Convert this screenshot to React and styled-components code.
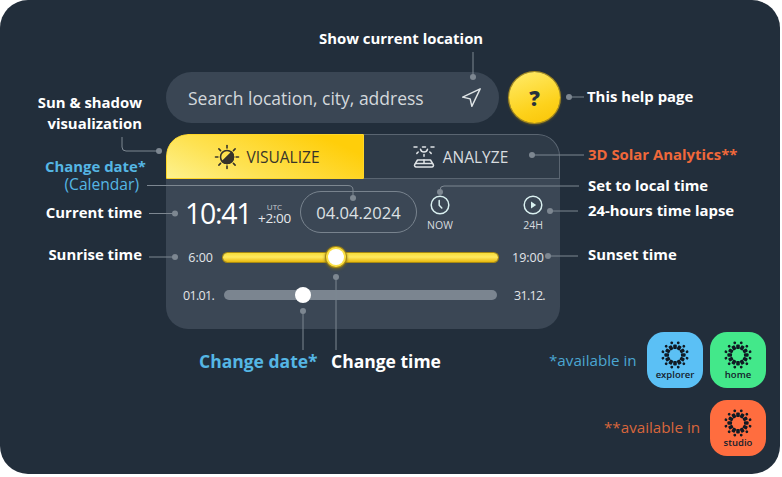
import React from "react";
import styled, { createGlobalStyle } from "styled-components";

const GlobalStyle = createGlobalStyle`
  html, body {
    margin: 0;
    padding: 0;
    background: #fff;
    font-family: "Open Sans", "Liberation Sans", sans-serif;
  }
`;

const Frame = styled.div`
  position: relative;
  box-sizing: border-box;
  width: 780px;
  height: 474px;
  padding: 72px 0 0 166px;
  background: #222e3b;
  border-radius: 28px;
  overflow: hidden;
`;

const Widget = styled.div`
  display: flex;
  flex-direction: column;
  gap: 11px;
  width: 394px;
`;

const SearchRow = styled.div`
  display: flex;
  gap: 10px;
`;

const SearchBar = styled.div`
  flex: 1;
  height: 51px;
  box-sizing: border-box;
  padding: 0 18px 0 22px;
  display: flex;
  align-items: center;
  justify-content: space-between;
  background: #3a4654;
  border-radius: 26px;
  color: #d3d8dc;
  font-size: 17.5px;
`;

const HelpButton = styled.div`
  width: 51px;
  height: 51px;
  display: flex;
  align-items: center;
  justify-content: center;
  border-radius: 50%;
  background: linear-gradient(160deg, #ffe85f 10%, #fdd21c 65%, #f9c406 100%);
  box-shadow: 0 0 0 1px #a98c1e, 0 1px 3px #8c7518;
  color: #28313c;
  font-size: 21px;
  font-weight: 800;
`;

const Panel = styled.div`
  height: 195px;
  background: #3b4755;
  border-radius: 22px;
  overflow: hidden;
  display: flex;
  flex-direction: column;
`;

const Tabs = styled.div`
  display: flex;
  height: 45px;
  flex: none;
`;

const Tab = styled.div`
  display: flex;
  align-items: center;
  justify-content: center;
  box-sizing: border-box;
  font-size: 15.5px;
  ${(p) =>
    p.$active
      ? `
    width: 198px;
    gap: 6px;
    padding-left: 4px;
    color: #37342a;
    background: linear-gradient(25deg, #fdf28f 0%, #fee252 35%, #ffce0a 85%);
    border: 1px solid #ffd728;
    border-radius: 22px 0 0 0;
  `
      : `
    flex: 1;
    gap: 8px;
    padding-right: 2px;
    color: #d8dcdf;
    background: #2f3b48;
    border: 1px solid #5a6571;
    border-left: 0;
    border-radius: 0 22px 0 0;
  `}
`;

const TimeRow = styled.div`
  display: flex;
  align-items: center;
  height: 66px;
  flex: none;
  padding-left: 19px;
`;

const Clock = styled.div`
  flex: none;
  width: 66px;
  color: #fff;
  font-size: 28.5px;
  font-weight: 500;
  letter-spacing: -1.3px;
  line-height: 1;
  margin-top: 2px;
`;

const Zone = styled.div`
  flex: none;
  width: 37px;
  margin: 2px 7px 0 5px;
  display: flex;
  flex-direction: column;
  align-items: center;
  gap: 1px;
  color: #e7eaec;
  font-size: 13.5px;
  letter-spacing: -0.3px;
  line-height: 12px;
  span {
    font-size: 8px;
    line-height: 9px;
    letter-spacing: 0;
    color: #c9ced3;
  }
`;

const DatePill = styled.div`
  width: 117px;
  height: 42px;
  box-sizing: border-box;
  display: flex;
  align-items: center;
  justify-content: center;
  border: 1px solid #78838e;
  border-radius: 21px;
  color: #dde1e4;
  font-size: 16.6px;
`;

const Action = styled.div`
  position: absolute;
  top: 195px;
  left: ${(p) => p.$x}px;
  width: 40px;
  display: flex;
  flex-direction: column;
  align-items: center;
  gap: 4px;
  color: #d7dbdf;
  font-size: 10.5px;
  line-height: 12px;
`;

const SliderRow = styled.div`
  display: flex;
  align-items: center;
  height: ${(p) => p.$height}px;
  flex: none;
  color: #e2e5e8;
  font-size: 12.5px;
  letter-spacing: ${(p) => p.$spacing}px;
`;

const RangeLabel = styled.div`
  width: ${(p) => p.$width}px;
  flex: none;
  text-align: right;
`;

const Track = styled.div`
  position: relative;
  flex: none;
  width: ${(p) => p.$width}px;
  height: ${(p) => (p.$yellow ? 9 : 10)}px;
  margin: 0 ${(p) => p.$after}px 0 ${(p) => p.$before}px;
  border-radius: 5px;
  background: ${(p) =>
    p.$yellow
      ? "linear-gradient(180deg, #f6dc38 0%, #ffe95f 45%, #e8b90c 100%)"
      : "#7b8590"};
  box-shadow: ${(p) => (p.$yellow ? "0 0 0 1px #a88a12" : "none")};
`;

const Thumb = styled.div`
  position: absolute;
  top: 50%;
  left: ${(p) => p.$left}px;
  width: ${(p) => p.$size}px;
  height: ${(p) => p.$size}px;
  transform: translate(-50%, -50%);
  border-radius: 50%;
  background: #fff;
  box-shadow: ${(p) => (p.$yellow ? "0 0 0 2px #fbe045, 0 0 0 3px #a88a12, 0 1px 3px 3px #7d6d1c" : "none")};
`;

const Leaders = styled.svg`
  position: absolute;
  inset: 0;
  pointer-events: none;
`;

const Note = styled.div`
  position: absolute;
  top: ${(p) => p.$y}px;
  ${(p) => (p.$right !== undefined ? `right: ${780 - p.$right}px; text-align: right;` : `left: ${p.$x}px;`)}
  transform: translateY(calc(-50% - 1px));
  white-space: nowrap;
  color: ${(p) => p.$color || "#fff"};
  font-size: ${(p) => p.$size || 14.9}px;
  font-weight: ${(p) => p.$weight || 700};
  line-height: 21px;
`;

const AppTile = styled.div`
  position: absolute;
  left: ${(p) => p.$x}px;
  top: ${(p) => p.$y}px;
  width: 56px;
  height: 56px;
  display: flex;
  flex-direction: column;
  align-items: center;
  padding-top: 9px;
  box-sizing: border-box;
  background: ${(p) => p.$bg};
  border-radius: 17px;
  color: #14202c;
  font-size: 9.5px;
  font-weight: 600;
  line-height: 12px;
`;

function SunLogo() {
  const spokes = Array.from({ length: 12 }, (_, i) => i * 30);
  return (
    <svg width="28" height="28" viewBox="0 0 28 28" fill="#101a24">
      {spokes.map((a) => (
        <g key={a} transform={`rotate(${a} 14 14)`}>
          <rect x="12.2" y="3.4" width="3.6" height="4.6" rx="1" />
          <circle cx="14" cy="1.5" r="1.4" transform="rotate(15 14 14)" />
        </g>
      ))}
    </svg>
  );
}

function HalfSun() {
  const rays = [0, 45, 90, 135, 180, 225, 270, 315];
  return (
    <svg width="26" height="26" viewBox="0 0 26 26" fill="none" stroke="#37342a" strokeWidth="1.6" strokeLinecap="round">
      <circle cx="13" cy="13" r="6.5" />
      <path d="M8.4 17.6a6.5 6.5 0 0 0 9.2 -9.2z" fill="#37342a" />
      {rays.map((a) => (
        <path key={a} d="M13 1.5v2.4" transform={`rotate(${a} 13 13)`} />
      ))}
    </svg>
  );
}

function PanelSun() {
  return (
    <svg width="22" height="22" viewBox="0 0 22 22" fill="none" stroke="#dfe3e6" strokeWidth="1.5" strokeLinecap="round" strokeLinejoin="round">
      <path d="M7.5 3.2a3.6 3.6 0 0 0 7 0" />
      <path d="M1 1h3M18 1h3M9.5 1h3M11 8.4v1.8M5.2 6l-1.4 1.4M16.8 6l1.4 1.4" />
      <path d="M4.5 14h13l2.8 4.6a1.6 1.6 0 0 1 -1.4 2.4H3.1a1.6 1.6 0 0 1 -1.4 -2.4z" />
      <path d="M2.5 17.5h17M11 14v3.5" />
    </svg>
  );
}

function NowIcon() {
  return (
    <svg width="20" height="20" viewBox="0 0 20 20" fill="none" stroke="#d9f0f0" strokeWidth="1.5" strokeLinecap="round" strokeLinejoin="round">
      <circle cx="10" cy="10" r="8.8" />
      <path d="M9.2 5.6v4.6l2.6 2.8" />
    </svg>
  );
}

function PlayIcon() {
  return (
    <svg width="20" height="20" viewBox="0 0 20 20" fill="none" stroke="#d9f0f0" strokeWidth="1.5">
      <circle cx="10" cy="10" r="8.8" />
      <path d="M8 6.6l5.2 3.4L8 13.4z" fill="#d9f0f0" stroke="none" />
    </svg>
  );
}

const lines = [
  "M473 52V77",
  "M569 97H584",
  "M532 155H584",
  "M440 192V190Q440 186 444 186H579",
  "M550 211H578",
  "M122 137V147Q122 151 126 151H159",
  "M147 185.5H348Q353 185.5 353 190V198",
  "M149 213.5H175",
  "M149 257H175",
  "M548 256H578",
  "M336 277V350",
  "M303 311V350",
];

const dots = [
  [473, 77], [569, 97], [532, 155], [440, 192], [550, 211], [159, 151],
  [353, 198], [175, 213.5], [175, 257], [548, 256], [336, 277], [303, 311],
];

export default function App() {
  return (
    <Frame>
      <GlobalStyle />
      <Widget>
        <SearchRow>
          <SearchBar>
            Search location, city, address
            <svg width="20" height="20" viewBox="0 0 24 24" fill="none" stroke="#dfe4e6" strokeWidth="1.7" strokeLinejoin="round">
              <polygon points="2,11 23,1 13,22 11,13" />
            </svg>
          </SearchBar>
          <HelpButton>?</HelpButton>
        </SearchRow>
        <Panel>
          <Tabs>
            <Tab $active>
              <HalfSun />
              VISUALIZE
            </Tab>
            <Tab>
              <PanelSun />
              ANALYZE
            </Tab>
          </Tabs>
          <TimeRow>
            <Clock>10:41</Clock>
            <Zone>
              <span>UTC</span>
              +2:00
            </Zone>
            <DatePill>04.04.2024</DatePill>
          </TimeRow>
          <SliderRow $height={24} $spacing={0}>
            <RangeLabel $width={47}>6:00</RangeLabel>
            <Track $yellow $width={275} $before={10} $after={14}>
              <Thumb $yellow $left={113} $size={16} />
            </Track>
            <div>19:00</div>
          </SliderRow>
          <SliderRow $height={52} $spacing={-0.7}>
            <RangeLabel $width={48}>01.01.</RangeLabel>
            <Track $width={273} $before={10} $after={17}>
              <Thumb $left={79} $size={16} />
            </Track>
            <div>31.12.</div>
          </SliderRow>
        </Panel>
      </Widget>

      <Action $x={420}>
        <NowIcon />
        NOW
      </Action>
      <Action $x={513}>
        <PlayIcon />
        24H
      </Action>

      <Leaders width="780" height="474" viewBox="0 0 780 474" fill="none">
        {lines.map((d) => (
          <path key={d} d={d} stroke="#7d8791" strokeWidth="1" />
        ))}
        {dots.map(([x, y]) => (
          <circle key={`${x}-${y}`} cx={x} cy={y} r="3" fill="#7d8791" />
        ))}
      </Leaders>

      <Note $x={319} $y={39}>Show current location</Note>
      <Note $x={587} $y={97}>This help page</Note>
      <Note $x={588} $y={155} $color="#f0683a">3D Solar Analytics**</Note>
      <Note $x={588} $y={186}>Set to local time</Note>
      <Note $x={588} $y={211}>24-hours time lapse</Note>
      <Note $x={588} $y={255}>Sunset time</Note>
      <Note $right={142} $y={114}>Sun &amp; shadow<br />visualization</Note>
      <Note $right={146} $y={167} $color="#55b6e4">Change date*</Note>
      <Note $right={139} $y={185} $color="#55b6e4" $weight={400} $size={15.6}>(Calendar)</Note>
      <Note $right={142} $y={213}>Current time</Note>
      <Note $right={142} $y={255}>Sunrise time</Note>
      <Note $x={199} $y={362} $size={17.5} $color="#55b6e4">Change date*</Note>
      <Note $x={331} $y={362} $size={17.5}>Change time</Note>
      <Note $x={549} $y={361} $color="#4ba6d2" $weight={400} $size={15.2}>*available in</Note>
      <Note $x={604} $y={428} $color="#d9663c" $weight={400} $size={15.2}>**available in</Note>

      <AppTile $x={647} $y={332} $bg="#5bc0f5"><SunLogo />explorer</AppTile>
      <AppTile $x={710} $y={332} $bg="#43e88a"><SunLogo />home</AppTile>
      <AppTile $x={710} $y={400} $bg="#ff6d3f"><SunLogo />studio</AppTile>
    </Frame>
  );
}
